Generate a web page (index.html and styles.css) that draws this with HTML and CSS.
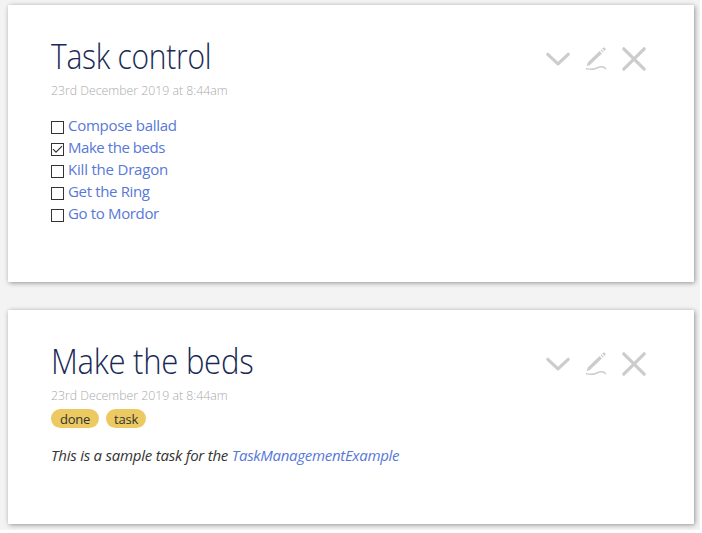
FILE: index.html
```
<!DOCTYPE html>
<html lang="en">
<head>
<meta charset="utf-8">
<title>Task control</title>
<link rel="stylesheet" href="styles.css">
</head>
<body>
<svg class="defs" width="0" height="0" aria-hidden="true">
  <symbol id="down" viewBox="0 0 26 26"><path d="M2.8 8.300 13 17.900 23.200 8.300" fill="none" stroke="currentColor" stroke-width="3.200" stroke-linecap="round" stroke-linejoin="round"/></symbol>
  <symbol id="edit" viewBox="0 0 26 26"><path d="M3.800 20.300 4.700 16.600 16.600 5.100l2.300 2.300L6.900 18.900zM17.500 4.300l.9-.9 2.300 2.300-.9.9zM19.200 2.600l.7-.7c1.700-1.300 3.500.5 2.300 2.200l-.7.8z" fill="currentColor"/><path d="M3.500 22.700c3 .5 5.200 1.100 8.400 0 4.500-1.700 8.500-3.200 10.600 0" fill="none" stroke="currentColor" stroke-width="1.500" stroke-linecap="round"/></symbol>
  <symbol id="close" viewBox="0 0 26 26"><path d="m2.800 2.800 20.400 20.400M23.200 2.800 2.800 23.200" fill="none" stroke="currentColor" stroke-width="3.200" stroke-linecap="round"/></symbol>
</svg>
<main class="river">
  <article class="card control">
    <header class="heading">
      <h1 class="title title-control">Task control</h1>
      <nav class="tools"><svg><use href="#down"/></svg><svg><use href="#edit"/></svg><svg><use href="#close"/></svg></nav>
    </header>
    <div class="date">23rd December 2019 at 8:44am</div>
    <ul class="tasks">
      <li><span class="box"></span><a class="t1">Compose ballad</a></li>
      <li><span class="box"><svg viewBox="0 0 11 11"><path d="M1 5.200 4 8.200 10 2.200"/></svg></span><a class="t2">Make the beds</a></li>
      <li><span class="box"></span><a class="t3">Kill the Dragon</a></li>
      <li><span class="box"></span><a class="t4">Get the Ring</a></li>
      <li><span class="box"></span><a class="t5">Go to Mordor</a></li>
    </ul>
  </article>
  <article class="card beds">
    <header class="heading">
      <h1 class="title title-beds">Make the beds</h1>
      <nav class="tools"><svg><use href="#down"/></svg><svg><use href="#edit"/></svg><svg><use href="#close"/></svg></nav>
    </header>
    <div class="date">23rd December 2019 at 8:44am</div>
    <div class="tags"><span class="tag done">done</span><span class="tag task">task</span></div>
    <p class="body"><em>This is a sample task for the <a>TaskManagementExample</a></em></p>
  </article>
</main>
</body>
</html>
```

FILE: styles.css
```
* { box-sizing: border-box; }
html { background: #fff; }
body { margin: 0; font-family: "Open Sans", "Noto Sans", sans-serif; color: #333; }
.defs { position: absolute; }
.river {
  width: 700px;
  height: 530px;
  padding: 5px 6px 0 8px;
  background: #f3f3f3;
  display: flex;
  flex-direction: column;
  gap: 28px;
  overflow: hidden;
}
.card {
  flex: none;
  background: #fff;
  border-radius: 1px;
  padding: 28px 47px 0 43px;
  box-shadow: 1px 1px 5px rgba(0, 0, 0, .4);
  white-space: nowrap;
}
.control { height: 277px; }
.beds { height: 214px; }
.heading { display: flex; justify-content: space-between; height: 47px; }
.title { margin: 0; font-size: 34px; line-height: 46px; font-weight: 300; color: #182955; letter-spacing: -.3px; transform-origin: left; }
.title-control { transform: scaleX(.882); }
.title-beds { transform: scaleX(.914); }
.tools { display: flex; gap: 12px; padding-top: 13px; color: #ccc; }
.tools svg { width: 26px; height: 26px; }
.date { width: max-content; font-size: 13px; line-height: 20px; font-weight: 300; color: #aaa; transform: scaleX(.945); transform-origin: left; }
.tasks { list-style: none; margin: 14px 0 0; padding: 0; }
.tasks li { display: flex; height: 22px; line-height: 22px; font-size: 15px; }
.box { width: 13px; height: 13px; margin: 7px 4px 0 0; border: 1px solid #333; }
.box svg { display: block; width: 11px; height: 11px; }
.box path { fill: none; stroke: #333; stroke-width: 1.2; }
a { color: #5778d8; }
.t1 { letter-spacing: -.28px; }
.t2 { letter-spacing: -.45px; }
.t3 { letter-spacing: -.2px; }
.t4 { letter-spacing: -.35px; }
.t5 { letter-spacing: -.35px; }
.tags { display: flex; gap: 7px; height: 23px; padding-top: 4px; }
.tag { height: 19px; border-radius: 10px; background: #ecc961; font-size: 13px; line-height: 20px; text-align: center; letter-spacing: -.2px; }
.done { width: 48px; }
.task { width: 40px; }
.body { margin: 16px 0 0; font-size: 15px; line-height: 22px; letter-spacing: -.23px; }
.body a { letter-spacing: -.3px; }
```
